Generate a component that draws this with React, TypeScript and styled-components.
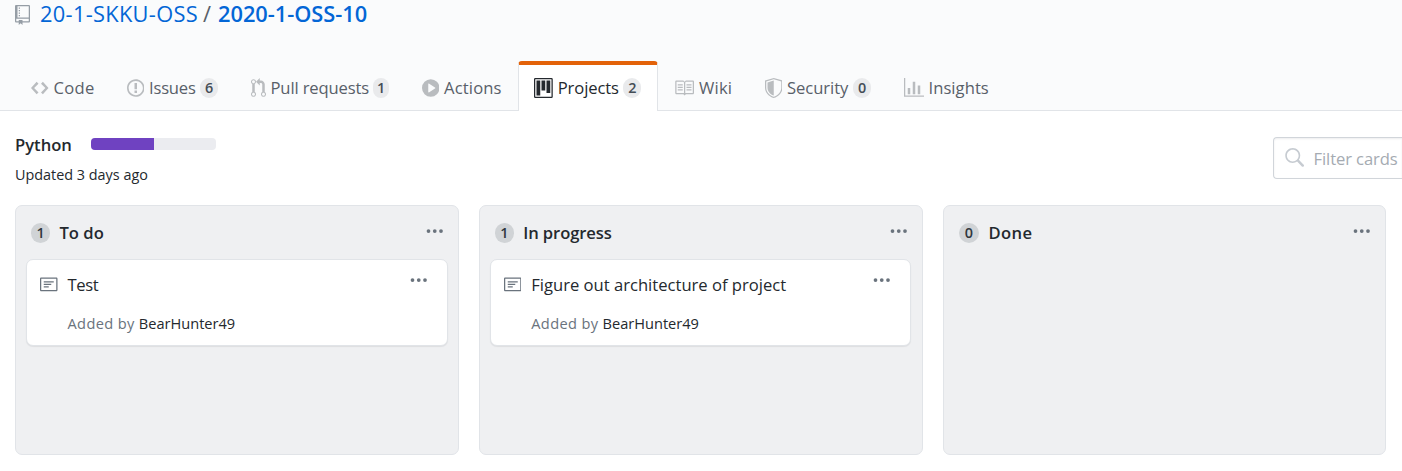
import React from "react";
import styled, { createGlobalStyle } from "styled-components";

const GlobalStyle = createGlobalStyle`
  *, *::before, *::after { box-sizing: border-box; }
  html, body { margin: 0; background: #fff; overflow: hidden; }
  body {
    width: 1402px;
    height: 471px;
    font-family: "Open Sans", "Noto Sans", sans-serif;
    font-size: 16.6px;
    color: #24292e;
  }
`;

const icons = {
  repo: { w: 12, d: "M4 9H3V8h1v1zm0-3H3v1h1V6zm0-2H3v1h1V4zm0-2H3v1h1V2zm8-1v12c0 .55-.45 1-1 1H6v2l-1.5-1.5L3 16v-2H1c-.55 0-1-.45-1-1V1c0-.55.45-1 1-1h10c.55 0 1 .45 1 1zm-1 10H1v2h2v-1h3v1h5v-2zm0-10H2v9h9V1z" },
  code: { w: 14, d: "M9.5 3L8 4.5 11.5 8 8 11.5 9.5 13 14 8 9.5 3zm-5 0L0 8l4.5 5L6 11.5 2.5 8 6 4.5 4.5 3z" },
  issue: { w: 14, d: "M7 2.3c3.14 0 5.7 2.56 5.7 5.7s-2.56 5.7-5.7 5.7A5.71 5.71 0 0 1 1.3 8c0-3.14 2.56-5.7 5.7-5.7zM7 1C3.14 1 0 4.14 0 8s3.14 7 7 7 7-3.14 7-7-3.14-7-7-7zm1 3H6v5h2V4zm0 6H6v2h2v-2z" },
  pull: { w: 12, d: "M11 11.28V5c-.03-.78-.34-1.47-.94-2.06C9.46 2.35 8.78 2.03 8 2H7V0L4 3l3 3V4h1c.27.02.48.11.69.31.21.2.3.42.31.69v6.28A1.993 1.993 0 0 0 10 15a1.993 1.993 0 0 0 1-3.72zm-1 2.92c-.66 0-1.2-.55-1.2-1.2 0-.65.55-1.2 1.2-1.2.65 0 1.2.55 1.2 1.2 0 .65-.55 1.2-1.2 1.2zM4 3c0-1.11-.89-2-2-2a1.993 1.993 0 0 0-1 3.72v6.56A1.993 1.993 0 0 0 2 15a1.993 1.993 0 0 0 1-3.72V4.72c.59-.34 1-.98 1-1.72zm-.8 10c0 .66-.55 1.2-1.2 1.2-.65 0-1.2-.55-1.2-1.2 0-.65.55-1.2 1.2-1.2.65 0 1.2.55 1.2 1.2zM2 4.2C1.34 4.2.8 3.65.8 3c0-.65.55-1.2 1.2-1.2.65 0 1.2.55 1.2 1.2 0 .65-.55 1.2-1.2 1.2z" },
  play: { w: 14, d: "M14 8A7 7 0 110 8a7 7 0 0114 0zm-8.223 3.482l4.599-3.066a.5.5 0 000-.832L5.777 4.518A.5.5 0 005 4.934v6.132a.5.5 0 00.777.416z" },
  project: { w: 15, d: "M10 12h3V2h-3v10zm-4-2h3V2H6v8zm-4 4h3V2H2v12zm-1 1h13V1H1v14zM14 0H1a1 1 0 0 0-1 1v14a1 1 0 0 0 1 1h13a1 1 0 0 0 1-1V1a1 1 0 0 0-1-1z" },
  book: { w: 16, d: "M3 5h4v1H3V5zm0 3h4V7H3v1zm0 2h4V9H3v1zm11-5h-4v1h4V5zm0 2h-4v1h4V7zm0 2h-4v1h4V9zm2-6v9c0 .55-.45 1-1 1H9.5l-1 1-1-1H2c-.55 0-1-.45-1-1V3c0-.55.45-1 1-1h5.5l1 1 1-1H15c.55 0 1 .45 1 1zm-8 .5L7.5 3H2v9h6V3.5zm7-.5H9.5l-.5.5V12h6V3z" },
  shield: { w: 14, d: "M0 2l7-2 7 2v6.02C14 12.69 8.69 16 7 16c-1.69 0-7-3.31-7-7.98V2zm1 .75L7 1l6 1.75v5.268C13 12.104 8.449 15 7 15c-1.449 0-6-2.896-6-6.982V2.75zm1 .75L7 2v12c-1.207 0-5-2.482-5-5.985V3.5z" },
  graph: { w: 16, d: "M16 14v1H0V0h1v14h15zM5 13H3V8h2v5zm4 0H7V3h2v10zm4 0h-2V6h2v7z" },
  search: { w: 16, d: "M15.7 13.3l-3.81-3.83A5.93 5.93 0 0 0 13 6c0-3.31-2.69-6-6-6S1 2.69 1 6s2.69 6 6 6c1.3 0 2.48-.41 3.47-1.11l3.83 3.81c.19.2.45.3.7.3.25 0 .52-.09.7-.3a.996.996 0 0 0 0-1.41v.01zM7 10.7c-2.59 0-4.7-2.11-4.7-4.7 0-2.59 2.11-4.7 4.7-4.7 2.59 0 4.7 2.11 4.7 4.7 0 2.59-2.11 4.7-4.7 4.7z" },
  note: { w: 14, d: "M3 10h4V9H3v1zm0-2h6V7H3v1zm0-2h8V5H3v1zm10 6H1V3h12v9zM1 2c-.55 0-1 .45-1 1v9c0 .55.45 1 1 1h12c.55 0 1-.45 1-1V3c0-.55-.45-1-1-1H1z" },
  kebab: { w: 14, d: "M3.5 8a1.5 1.5 0 1 1-3 0 1.5 1.5 0 0 1 3 0zm5 0a1.5 1.5 0 1 1-3 0 1.5 1.5 0 0 1 3 0zm5 0a1.5 1.5 0 1 1-3 0 1.5 1.5 0 0 1 3 0z" },
};
type IconName = keyof typeof icons;

const Svg = styled.svg`
  display: block;
  flex: none;
  fill: currentColor;
`;

const Octicon = ({ name }: { name: IconName }) => {
  const { w, d } = icons[name];
  return (
    <Svg width={w * 1.25} height={20} viewBox={`0 0 ${w} 16`} aria-hidden="true">
      <path fillRule="evenodd" d={d} />
    </Svg>
  );
};

const Header = styled.header`
  height: 111px;
  background: #fafbfc;
  border-bottom: 1px solid #e1e4e8;
  display: flex;
  flex-direction: column;
  justify-content: space-between;
`;

const RepoTitle = styled.h1`
  display: flex;
  align-items: center;
  height: 28px;
  margin: 0;
  padding-left: 15px;
  font-size: 21.8px;
  font-weight: 400;
  line-height: 28px;
  color: #586069;
  white-space: nowrap;
`;

const RepoIcon = styled.span`
  width: 25px;
  color: #959da5;
  padding-top: 2px;
`;

const RepoLink = styled.a<{ $bold?: boolean; $width: number; $tracking: number }>`
  width: ${(p) => p.$width}px;
  color: #0366d6;
  font-weight: ${(p) => (p.$bold ? 600 : 400)};
  letter-spacing: ${(p) => p.$tracking}px;
`;

const Slash = styled.span`
  width: 15px;
`;

const Tabs = styled.nav`
  display: flex;
  align-items: flex-end;
  height: 50px;
  margin-bottom: -1px;
  padding-left: 15px;
`;

const Tab = styled.a<{ $active?: boolean; $width: number }>`
  display: flex;
  align-items: center;
  flex: none;
  width: ${(p) => p.$width}px;
  height: 50px;
  padding-left: 15px;
  border: 1px solid ${(p) => (p.$active ? "#e1e4e8" : "transparent")};
  border-top: 4px solid ${(p) => (p.$active ? "#e36209" : "transparent")};
  border-bottom: 0;
  border-radius: 4px 4px 0 0;
  background: ${(p) => (p.$active ? "#fff" : "transparent")};
  color: ${(p) => (p.$active ? "#24292e" : "#586069")};
  white-space: nowrap;
`;

const TabIcon = styled.span<{ $active?: boolean }>`
  margin-right: 5px;
  color: ${(p) => (p.$active ? "#24292e" : "#b9bcbf")};
`;

const TabLabel = styled.span<{ $width: number; $tracking: number }>`
  width: ${(p) => p.$width}px;
  padding-bottom: 2px;
  letter-spacing: ${(p) => p.$tracking}px;
`;

const Counter = styled.span<{ $dark?: boolean; $width?: number }>`
  display: inline-flex;
  align-items: center;
  justify-content: center;
  flex: none;
  width: ${(p) => p.$width ?? 18}px;
  height: 20px;
  border-radius: 10px;
  background: ${(p) => (p.$dark ? "#d0d3d6" : "#e9eaec")};
  color: ${(p) => (p.$dark ? "#2f363d" : "#444d56")};
  font-size: 14.4px;
  font-weight: 600;
  line-height: 20px;
`;

const ProjectBar = styled.section`
  display: flex;
  justify-content: space-between;
  height: 94px;
  padding: 22px 0 0 15px;
`;

const TitleRow = styled.div`
  display: flex;
  align-items: flex-start;
  height: 24px;
`;

const ProjectName = styled.h2`
  width: 76px;
  margin: 0;
  font-size: 16.6px;
  font-weight: 600;
  line-height: 24px;
`;

const Progress = styled.span`
  display: flex;
  width: 125px;
  height: 12px;
  margin-top: 5px;
  border-radius: 4px;
  background: #ebecf0;
  overflow: hidden;
`;

const ProgressDone = styled.span`
  width: 63px;
  background: #6f42c1;
`;

const Updated = styled.p`
  margin: 8px 0 0;
  font-size: 14.4px;
  line-height: 20px;
`;

const Filter = styled.div`
  display: flex;
  align-items: center;
  width: 129px;
  height: 42px;
  margin-top: 4px;
  padding-left: 9.5px;
  border: 1px solid #d1d5da;
  border-width: 1.5px 0 1.5px 1.5px;
  border-radius: 4px 0 0 4px;
  box-shadow: inset 0 1px 2px rgba(27, 31, 35, 0.075);
  color: #c6cbd1;
`;

const Placeholder = styled.span`
  margin-left: 10px;
  color: #a5abb2;
  letter-spacing: -0.1px;
  white-space: nowrap;
`;

const Board = styled.main`
  display: flex;
  gap: 20px;
  padding-left: 15px;
`;

const Column = styled.section`
  flex: none;
  width: 443.75px;
  height: 250px;
  padding: 0 10px;
  border: 1px solid #e1e4e8;
  border-radius: 7px;
  background: #eff0f2;
`;

const ColumnHead = styled.header`
  display: flex;
  align-items: center;
  height: 53px;
  padding: 0 4.5px 0 5px;
`;

const ColumnName = styled.h3<{ $tracking: number }>`
  flex: 1;
  margin: 0 0 0 9.5px;
  font-size: 16.6px;
  font-weight: 600;
  letter-spacing: ${(p) => p.$tracking}px;
`;

const Menu = styled.span`
  flex: none;
  margin-bottom: 3px;
  color: #6a737d;
`;

const Card = styled.article`
  display: flex;
  align-items: flex-start;
  width: 421.5px;
  height: 87px;
  padding: 15px 19.5px 0 13px;
  border: 1px solid #e1e4e8;
  border-radius: 7px;
  background: #fff;
  box-shadow: 0 1px 1px rgba(27, 31, 35, 0.08);
  color: #6a737d;
`;

const CardBody = styled.div`
  flex: 1;
  margin-left: 10px;
`;

const CardTitle = styled.p<{ $tracking: number }>`
  margin: -3px 0 0;
  line-height: 26px;
  color: #24292e;
  letter-spacing: ${(p) => p.$tracking}px;
`;

const CardMeta = styled.p`
  margin: 14px 0 0;
  font-size: 14.6px;
  line-height: 22px;
  letter-spacing: 0.36px;
`;

const Author = styled.a`
  color: #24292e;
  letter-spacing: 0;
`;

const CardMenu = styled(Menu)`
  margin-top: -5px;
`;

type TabData = { icon: IconName; text: string; count?: number; cw?: number; active?: boolean; width: number; label: number; tracking: number };

const tabs: TabData[] = [
  { icon: "code", text: "Code", width: 95.5, label: 46, tracking: 0.3 },
  { icon: "issue", text: "Issues", count: 6, width: 124, label: 51, tracking: -0.2 },
  { icon: "pull", text: "Pull requests", count: 1, cw: 16, width: 171, label: 102.5, tracking: -0.14 },
  { icon: "play", text: "Actions", width: 112.5, label: 62, tracking: 0.15 },
  { icon: "project", text: "Projects", count: 2, active: true, width: 140, label: 65.5, tracking: -0.12 },
  { icon: "book", text: "Wiki", width: 90.5, label: 38, tracking: 0.2 },
  { icon: "shield", text: "Security", count: 0, width: 139, label: 66, tracking: -0.05 },
  { icon: "graph", text: "Insights", width: 116, label: 64, tracking: 0.05 },
];

type CardData = { title: string; tracking: number; author: string };
type ColumnData = { name: string; tracking: number; cards: CardData[] };

const columns: ColumnData[] = [
  { name: "To do", tracking: 0, cards: [{ title: "Test", tracking: -0.4, author: "BearHunter49" }] },
  { name: "In progress", tracking: -0.1, cards: [{ title: "Figure out architecture of project", tracking: 0, author: "BearHunter49" }] },
  { name: "Done", tracking: 0.35, cards: [] },
];

export default function App() {
  return (
    <>
      <GlobalStyle />
      <Header>
        <RepoTitle>
          <RepoIcon><Octicon name="repo" /></RepoIcon>
          <RepoLink $width={163} $tracking={0.32}>20-1-SKKU-OSS</RepoLink>
          <Slash>/</Slash>
          <RepoLink $bold $width={160} $tracking={-0.02}>2020-1-OSS-10</RepoLink>
        </RepoTitle>
        <Tabs>
          {tabs.map((t) => (
            <Tab key={t.text} $active={t.active} $width={t.width}>
              <TabIcon $active={t.active}><Octicon name={t.icon} /></TabIcon>
              <TabLabel $width={t.label} $tracking={t.tracking}>{t.text}</TabLabel>
              {t.count !== undefined && <Counter $width={t.cw}>{t.count}</Counter>}
            </Tab>
          ))}
        </Tabs>
      </Header>
      <ProjectBar>
        <div>
          <TitleRow>
            <ProjectName>Python</ProjectName>
            <Progress><ProgressDone /></Progress>
          </TitleRow>
          <Updated>Updated 3 days ago</Updated>
        </div>
        <Filter>
          <Octicon name="search" />
          <Placeholder>Filter cards</Placeholder>
        </Filter>
      </ProjectBar>
      <Board>
        {columns.map((c) => (
          <Column key={c.name}>
            <ColumnHead>
              <Counter $dark $width={c.cards.length ? 19 : 20.5}>{c.cards.length}</Counter>
              <ColumnName $tracking={c.tracking}>{c.name}</ColumnName>
              <Menu><Octicon name="kebab" /></Menu>
            </ColumnHead>
            {c.cards.map((card) => (
              <Card key={card.title}>
                <Octicon name="note" />
                <CardBody>
                  <CardTitle $tracking={card.tracking}>{card.title}</CardTitle>
                  <CardMeta>Added by <Author>{card.author}</Author></CardMeta>
                </CardBody>
                <CardMenu><Octicon name="kebab" /></CardMenu>
              </Card>
            ))}
          </Column>
        ))}
      </Board>
    </>
  );
}
